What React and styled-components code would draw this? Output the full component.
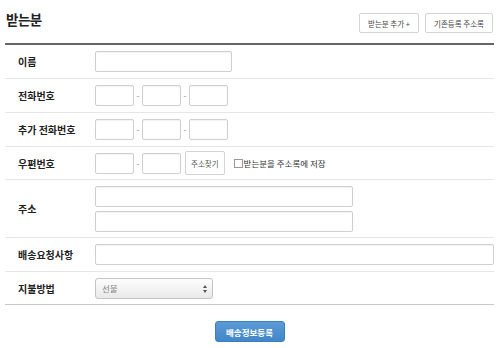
import React from 'react'
import styled, { createGlobalStyle } from 'styled-components'

const GlobalStyle = createGlobalStyle`
  body {
    margin: 0;
    background: #fff;
    font-family: "Noto Sans CJK KR", "Noto Sans", sans-serif;
    color: #333;
  }
`

const Wrap = styled.div`
  width: 500px;
  height: 348px;
  padding: 0 6px 0 5px;
  box-sizing: border-box;
`

const Head = styled.div`
  display: flex;
  align-items: center;
  justify-content: space-between;
  height: 45px;
  padding: 0 1px 6px 1px;
  box-sizing: border-box;
  border-bottom: 2px solid #666;
`

const Title = styled.h2`
  margin: 0;
  font-size: 13.5px;
  font-weight: 700;
  color: #222;
  letter-spacing: -0.5px;
`

const HeadButtons = styled.div`
  display: flex;
  gap: 6px;
  padding-top: 9px;
`

const SmallButton = styled.button`
  height: 20px;
  padding: 0 ${p => p.$pad || 7}px;
  border: 1px solid #d4d4d4;
  border-radius: 2px;
  background: #fff;
  font-family: inherit;
  font-size: 7.5px;
  color: #444;
  cursor: pointer;
  white-space: nowrap;
`

const Row = styled.div`
  display: flex;
  align-items: center;
  min-height: ${p => p.$h || 33}px;
  border-bottom: 1px solid ${p => p.$last ? '#c8c8c8' : '#e6e6e6'};
`

const Label = styled.div`
  width: 77px;
  padding-left: 13px;
  font-size: 10px;
  font-weight: 700;
  color: #222;
  flex-shrink: 0;
`

const Field = styled.div`
  display: flex;
  flex-direction: ${p => p.$column ? 'column' : 'row'};
  align-items: ${p => p.$column ? 'flex-start' : 'center'};
  gap: ${p => p.$column ? 4 : 0}px;
  flex: 1;
`

const TextInput = styled.input`
  width: ${p => p.$w}px;
  height: 21px;
  box-sizing: border-box;
  border: 1px solid #cfcfcf;
  border-radius: 2px;
  box-shadow: inset 0 1px 1px rgba(0, 0, 0, 0.05);
  padding: 0 4px;
  font-family: inherit;
  font-size: 9px;
  outline: none;
`

const Dash = styled.span`
  width: 8px;
  text-align: center;
  font-size: 8px;
  color: #777;
`

const FindButton = styled(SmallButton)`
  height: 24px;
  margin-left: 4px;
  padding: 0 5px;
  font-size: 7.5px;
  color: #555;
`

const CheckLabel = styled.label`
  display: flex;
  align-items: center;
  margin-left: 9px;
  font-size: 8.5px;
  color: #333;
`

const Box = styled.span`
  width: 7px;
  height: 7px;
  border: 1px solid #999;
  margin-right: 1px;
  background: #fff;
`

const SelectBox = styled.div`
  position: relative;
  width: 118px;
  height: 21px;
  box-sizing: border-box;
  border: 1px solid #c4c4c4;
  border-radius: 3px;
  background: linear-gradient(#fdfdfd, #e9e9e9);
  display: flex;
  align-items: center;
  padding-left: 6px;
  font-size: 8.5px;
  color: #888;
`

const Arrows = styled.svg`
  position: absolute;
  right: 5px;
  top: 6px;
`

const Footer = styled.div`
  display: flex;
  justify-content: center;
  padding-top: 16px;
`

const SubmitButton = styled.button`
  width: 70px;
  height: 21px;
  border: 1px solid #3d7fbd;
  border-radius: 3px;
  background: linear-gradient(#5a9ad6, #4287c8);
  color: #fff;
  font-family: inherit;
  font-size: 8.5px;
  font-weight: 700;
  cursor: pointer;
`

export default function App() {
  return (
    <Wrap>
      <GlobalStyle />
      <Head>
        <Title>받는분</Title>
        <HeadButtons>
          <SmallButton $pad={8}>받는분 추가 +</SmallButton>
          <SmallButton $pad={8}>기존등록 주소록</SmallButton>
        </HeadButtons>
      </Head>

      <Row>
        <Label>이름</Label>
        <Field><TextInput $w={137} /></Field>
      </Row>

      <Row>
        <Label>전화번호</Label>
        <Field>
          <TextInput $w={39} />
          <Dash>-</Dash>
          <TextInput $w={39} />
          <Dash>-</Dash>
          <TextInput $w={39} />
        </Field>
      </Row>

      <Row>
        <Label>추가 전화번호</Label>
        <Field>
          <TextInput $w={39} />
          <Dash>-</Dash>
          <TextInput $w={39} />
          <Dash>-</Dash>
          <TextInput $w={39} />
        </Field>
      </Row>

      <Row $h={32}>
        <Label>우편번호</Label>
        <Field>
          <TextInput $w={39} />
          <Dash>-</Dash>
          <TextInput $w={39} />
          <FindButton>주소찾기</FindButton>
          <CheckLabel><Box />받는분을 주소록에 저장</CheckLabel>
        </Field>
      </Row>

      <Row $h={57}>
        <Label>주소</Label>
        <Field $column>
          <TextInput $w={258} />
          <TextInput $w={258} />
        </Field>
      </Row>

      <Row>
        <Label>배송요청사항</Label>
        <Field><TextInput $w={399} /></Field>
      </Row>

      <Row $last $h={32}>
        <Label>지불방법</Label>
        <Field>
          <SelectBox>
            선불
            <Arrows width="4" height="8" viewBox="0 0 4 8">
              <path d="M2 0 L4 3 L0 3 Z M0 5 L4 5 L2 8 Z" fill="#555" />
            </Arrows>
          </SelectBox>
        </Field>
      </Row>

      <Footer>
        <SubmitButton>배송정보등록</SubmitButton>
      </Footer>
    </Wrap>
  )
}
